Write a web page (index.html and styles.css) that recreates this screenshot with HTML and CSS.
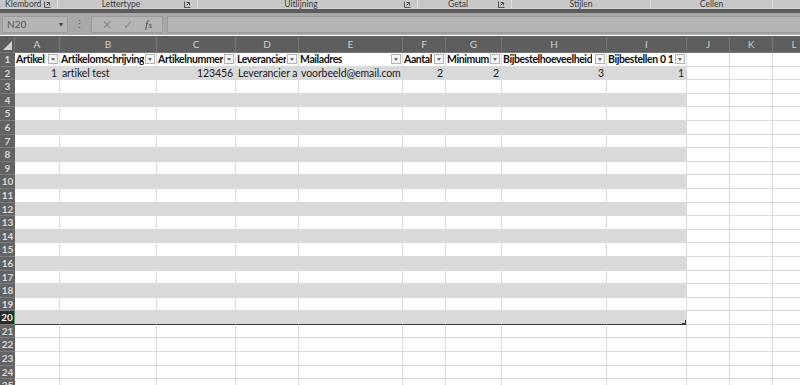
FILE: index.html
```html
<!DOCTYPE html>
<html lang="nl">
<head>
    <meta charset="UTF-8">
    <title>Bestellijst</title>
    <link rel="stylesheet" href="styles.css">
</head>
<body>
<div class="ribbon-groups">
	<div class="group group-klembord"><span class="group-name">Klembord</span><span class="launcher"><svg width="7" height="7" viewBox="0 0 7 7"><path d="M0.5 0.5v6h6" fill="none" stroke="#555" stroke-width="1"/><path d="M2.5 1.5h3v3M5.5 1.5l-3 3" fill="none" stroke="#555" stroke-width="1"/></svg></span></div>
	<div class="group group-lettertype"><span class="group-name">Lettertype</span><span class="launcher"><svg width="7" height="7" viewBox="0 0 7 7"><path d="M0.5 0.5v6h6" fill="none" stroke="#555" stroke-width="1"/><path d="M2.5 1.5h3v3M5.5 1.5l-3 3" fill="none" stroke="#555" stroke-width="1"/></svg></span></div>
	<div class="group group-uitlijning"><span class="group-name">Uitlijning</span><span class="launcher"><svg width="7" height="7" viewBox="0 0 7 7"><path d="M0.5 0.5v6h6" fill="none" stroke="#555" stroke-width="1"/><path d="M2.5 1.5h3v3M5.5 1.5l-3 3" fill="none" stroke="#555" stroke-width="1"/></svg></span></div>
	<div class="group group-getal"><span class="group-name">Getal</span><span class="launcher"><svg width="7" height="7" viewBox="0 0 7 7"><path d="M0.5 0.5v6h6" fill="none" stroke="#555" stroke-width="1"/><path d="M2.5 1.5h3v3M5.5 1.5l-3 3" fill="none" stroke="#555" stroke-width="1"/></svg></span></div>
	<div class="group group-stijlen"><span class="group-name">Stijlen</span></div>
	<div class="group group-cellen"><span class="group-name">Cellen</span></div>
	<div class="group group-rest"></div>
</div>
<div class="ribbon-edge"></div>
<div class="formula-bar">
	<div class="name-box"><span>N20</span><span class="name-arrow">&#9662;</span></div>
	<div class="grip">&#8942;</div>
	<div class="fx-box">
		<span class="fx-btn">&#10005;</span>
		<span class="fx-btn">&#10003;</span>
		<span class="fx-btn fx-label"><i>f</i><small>x</small></span>
	</div>
	<div class="formula-input"></div>
</div>

<div class="sheet">
	<div class="row col-heads">
		<div class="cell corner"><span class="corner-mark"></span></div>
		<div class="cell">A</div><div class="cell">B</div><div class="cell">C</div>
		<div class="cell">D</div><div class="cell">E</div><div class="cell">F</div>
		<div class="cell">G</div><div class="cell">H</div><div class="cell">I</div>
		<div class="cell">J</div><div class="cell">K</div><div class="cell">L</div>
	</div>
	<div class="row table-head">
		<div class="cell row-num">1</div>
		<div class="cell head"><span class="head-text">Artikel</span><span class="filter"></span></div>
		<div class="cell head"><span class="head-text">Artikelomschrijving</span><span class="filter"></span></div>
		<div class="cell head"><span class="head-text">Artikelnummer</span><span class="filter"></span></div>
		<div class="cell head"><span class="head-text">Leverancier</span><span class="filter"></span></div>
		<div class="cell head"><span class="head-text">Mailadres</span><span class="filter"></span></div>
		<div class="cell head"><span class="head-text">Aantal</span><span class="filter"></span></div>
		<div class="cell head"><span class="head-text">Minimum</span><span class="filter"></span></div>
		<div class="cell head"><span class="head-text">Bijbestelhoeveelheid</span><span class="filter"></span></div>
		<div class="cell head"><span class="head-text">Bijbestellen 0 1</span><span class="filter"></span></div>
		<div class="cell"></div><div class="cell"></div><div class="cell"></div>
	</div>
	<div class="row band">
		<div class="cell row-num">2</div>
		<div class="cell in-table num">1</div>
		<div class="cell in-table">artikel test</div>
		<div class="cell in-table num">123456</div>
		<div class="cell in-table">Leverancier a</div>
		<div class="cell in-table">voorbeeld@email.com</div>
		<div class="cell in-table num">2</div>
		<div class="cell in-table num">2</div>
		<div class="cell in-table num">3</div>
		<div class="cell in-table num">1</div>
		<div class="cell"></div><div class="cell"></div><div class="cell"></div>
	</div>
</div>

<script>
	// lege rijen 3 t/m 25 aanmaken
	var sheet = document.querySelector('.sheet');
	for(var r = 3; r <= 25; r++){
		var row = document.createElement('div');
		row.className = 'row';
		if(r <= 20 && r % 2 == 0) row.className += ' band';
		if(r == 20) row.className += ' last-row';
		var html = '<div class="cell row-num' + (r == 20 ? ' active' : '') + '">' + r + '</div>';
		for(var c = 0; c < 12; c++){
			var cls = 'cell';
			if(r <= 20 && c < 9) cls += ' in-table';
			if(r == 20 && c == 8) cls += ' table-end';
			html += '<div class="' + cls + '"></div>';
		}
		row.innerHTML = html;
		sheet.appendChild(row);
	}
</script>
</body>
</html>
```

FILE: styles.css
```css
*{
	padding:0;margin:0;box-sizing:border-box;
}
body{
	font-family:Lato,'Liberation Sans',sans-serif;
	font-size:10.5px;
	background:#fff;
	width:800px;height:385px;overflow:hidden;
}

/* lint met groepsnamen */
.ribbon-groups{
	height:9px;
	display:flex;
	background:#c7c7c7;
	border-bottom:1px solid #d6d6d6;
	font-size:8.5px;line-height:8px;
	color:#3c3c3c;
}
.group{
	display:flex;
	align-items:center;
	border-right:1px solid #dedede;
}
.group-name{flex:1;text-align:center;}
.launcher{width:10px;height:8px;display:flex;align-items:center;margin-right:3px;}
.group-klembord{width:58px;}
.group-klembord .group-name{text-align:left;padding-left:5px;}
.group-lettertype{width:140px;}
.group-uitlijning{width:220px;}
.group-getal{width:94px;}
.group-stijlen{width:139px;}
.group-cellen{width:122px;}
.group-rest{flex:1;border-right:0;}

.ribbon-edge{height:4px;background:#5c5c5c;}

/* formulebalk */
.formula-bar{
	height:22px;
	display:flex;
	align-items:center;
	background:#a8a8a8;
	padding:0 0 0 2px;
}
.name-box{
	width:66px;height:17px;
	background:#b4b4b4;
	border:1px solid #9a9a9a;
	display:flex;justify-content:space-between;align-items:center;
	padding:0 4px 0 4px;
	color:#5a5a5a;font-size:10px;
}
.name-arrow{font-size:8px;color:#4a4a4a;}
.grip{width:23px;text-align:center;color:#5a5a5a;font-size:11px;}
.fx-box{
	width:72px;height:17px;
	background:#b4b4b4;
	border:1px solid #9a9a9a;
	display:flex;align-items:center;justify-content:space-around;
	color:#8a8a8a;font-size:12px;
	padding:0 4px;
}
.fx-label{color:#4a4a4a;font-family:'Liberation Serif',serif;font-size:11px;}
.fx-label small{font-size:8px;}
.formula-input{
	flex:1;height:17px;margin-left:4px;
	background:#b4b4b4;
	border:1px solid #9a9a9a;border-right:0;
}

/* werkblad */
.sheet{margin-top:1px;}
.row{
	display:grid;
	grid-template-columns:15px 45px 97px 79px 63px 104px 43px 56px 105px 80px 43px 43px 43px;
	height:13.6px;
}
.cell{
	border-right:1px solid #dadada;
	border-bottom:1px solid #dadada;
	overflow:hidden;
	white-space:nowrap;
	line-height:12px;
	padding:0 2px;
	color:#1a1a1a;
	letter-spacing:-0.1px;
}
.num{text-align:right;}

.col-heads{height:17px;background:#5e5e5e;}
.col-heads .cell{
	border-color:#777;
	color:#cfcfcf;font-size:10px;line-height:17px;text-align:center;
	letter-spacing:0;
}
.corner{position:relative;}
.corner-mark{
	position:absolute;right:2px;bottom:2px;
	width:0;height:0;
	border-left:9px solid transparent;
	border-bottom:9px solid #d4d4d4;
}

.row-num{
	background:#636363;
	border-right:0;
	border-bottom:1px solid #7c7c7c;
	color:#dadada;font-size:10px;font-weight:bold;text-align:center;
	padding:0;letter-spacing:0;
}
.row-num.active{
	background:#2b2b2b;color:#f0f0f0;
	border-right:1px solid #3f9e5f;
}

.head{
	display:flex;align-items:center;justify-content:space-between;
	font-weight:bold;color:#111;
	font-size:10.5px;letter-spacing:-0.4px;
	padding:0 1px 0 1px;
}
.head-text{overflow:hidden;}
.filter{
	flex:none;
	width:10px;height:10px;margin-left:1px;
	border:1px solid #b4b4b4;
	background:#f6f6f6;
	position:relative;
}
.filter:after{
	content:'';
	position:absolute;left:2px;top:3px;
	border-left:2px solid transparent;
	border-right:2px solid transparent;
	border-top:3px solid #6a6a6a;
}

.band .in-table{background:#d9d9d9;border-right-color:#d9d9d9;border-bottom-color:#d9d9d9;}
.last-row .in-table{border-bottom:1px solid #3a3a3a;}
.table-end{position:relative;}
.table-end:after{
	content:'';
	position:absolute;right:0;bottom:0;
	width:3px;height:3px;
	border-right:1px solid #3a3a3a;border-bottom:1px solid #3a3a3a;
}
```
